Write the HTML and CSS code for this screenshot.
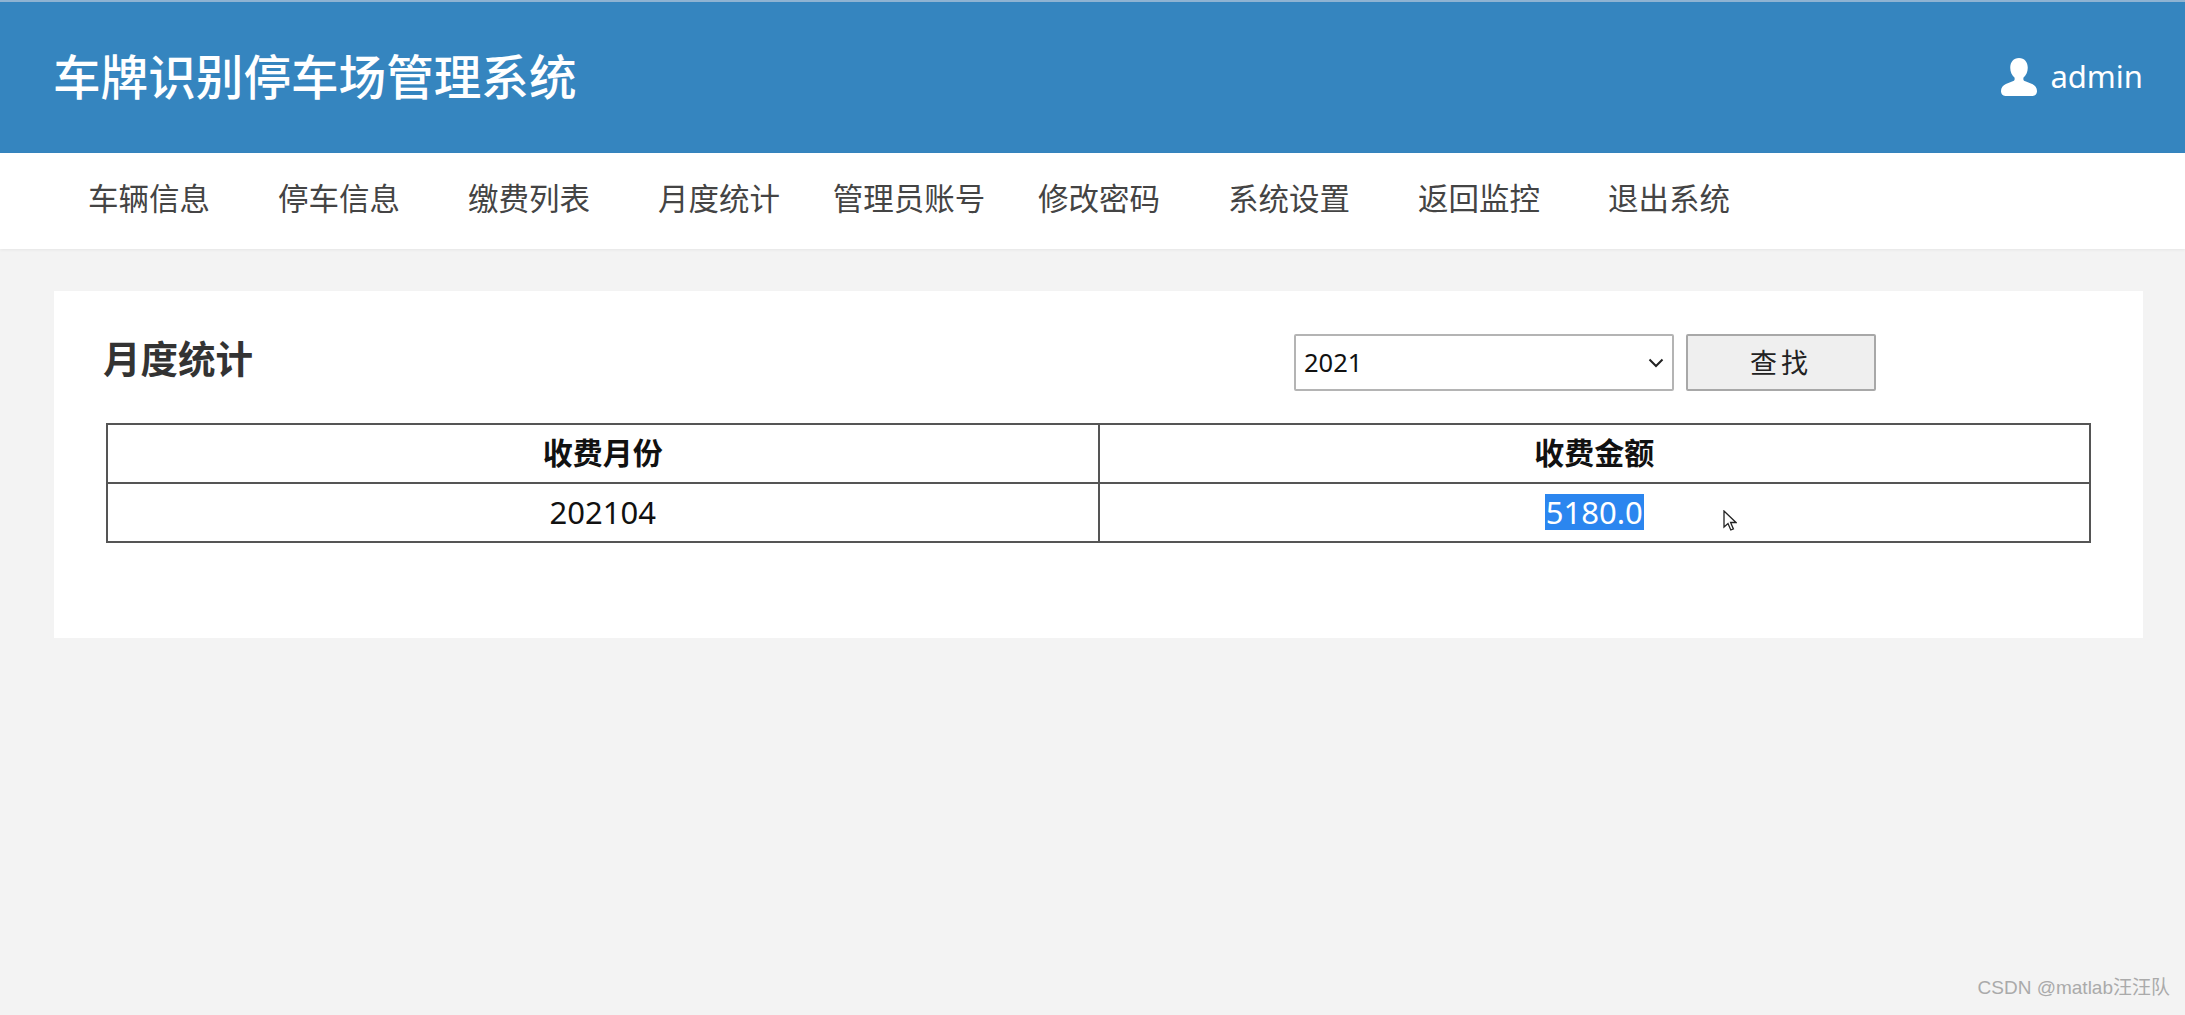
FILE: index.html
```html
<!DOCTYPE html>
<html lang="zh-CN">
<head>
<meta charset="utf-8">
<title>车牌识别停车场管理系统</title>
<link rel="stylesheet" href="styles.css">
</head>
<body>
<header class="topbar">
  <h1 class="brand">车牌识别停车场管理系统</h1>
  <div class="user">
    <svg class="user-icon" viewBox="0 0 37 39" aria-hidden="true"><path fill="#fff" d="M18.500 0c5.600 0 9 4.300 9 10 0 4.200-1.700 8-4.500 10.200v1.500c0 1 .7 1.600 2 2.100l7 3c3 1.300 5 3.900 5 7.200 0 2.600-1.600 5-4.500 5H4.500C1.600 39 0 36.600 0 34c0-3.300 2-5.900 5-7.200l7-3c1.300-.5 2-1.100 2-2.100v-1.500C11.200 18 9.500 14.200 9.500 10c0-5.700 3.400-10 9-10z"/></svg>
    <span class="user-name">admin</span>
  </div>
</header>
<nav class="nav">
  <a class="nav-item">车辆信息</a>
  <a class="nav-item">停车信息</a>
  <a class="nav-item">缴费列表</a>
  <a class="nav-item">月度统计</a>
  <a class="nav-item">管理员账号</a>
  <a class="nav-item">修改密码</a>
  <a class="nav-item">系统设置</a>
  <a class="nav-item">返回监控</a>
  <a class="nav-item">退出系统</a>
</nav>
<main class="main">
  <section class="card">
    <div class="card-head">
      <h2 class="card-title">月度统计</h2>
      <form class="search">
        <div class="select-wrap">
          <select class="select"><option>2021</option></select>
          <svg class="select-arrow" viewBox="0 0 16 10" aria-hidden="true"><path d="M1.500 1.500 8 8l6.500-6.500" fill="none" stroke="#222" stroke-width="2"/></svg>
        </div>
        <button class="button" type="button">查找</button>
      </form>
    </div>
    <table class="table">
      <thead>
        <tr><th>收费月份</th><th>收费金额</th></tr>
      </thead>
      <tbody>
        <tr><td>202104</td><td><span class="selected">5180.0</span></td></tr>
      </tbody>
    </table>
  </section>
</main>
<svg class="cursor" viewBox="0 0 14 22" aria-hidden="true"><path d="M1 1v16l4-3.500 2.800 6.500 2.600-1.100L7.600 12.500H13z" fill="#fff" stroke="#222" stroke-width="1.300"/></svg>
<div class="watermark">CSDN @matlab汪汪队</div>
</body>
</html>
```
FILE: styles.css
```css
* { box-sizing: border-box; }
html, body { height: 100%; }
body {
  margin: 0;
  height: 1015px;
  overflow: hidden;
  background: #f3f3f3;
  font-family: "Noto Sans", "Noto Sans CJK SC", sans-serif;
  color: #111;
}
.topbar {
  height: 153px;
  background: #3585bf;
  border-top: 2px solid #8fb3d2;
  display: flex;
  align-items: center;
  justify-content: space-between;
  padding: 0 42px 0 53px;
  color: #fff;
}
.brand {
  margin: 0 0 5px;
  font-size: 47.600px;
  font-weight: 500;
  line-height: 1;
  font-family: "Noto Sans CJK SC", sans-serif;
}
.user { display: flex; align-items: center; gap: 13px; margin-bottom: 2px; }
.user-icon { width: 36px; height: 38px; display: block; }
.user-name { font-size: 31px; line-height: 1; }
.nav {
  height: 96px;
  background: #fff;
  display: flex;
  align-items: center;
  padding: 0 0 9px 54px;
  box-shadow: 0 1px 3px rgba(0,0,0,.06);
}
.nav-item {
  width: 190px;
  text-align: center;
  font-size: 30.500px;
  color: #444;
  font-family: "Noto Sans CJK SC", sans-serif;
}
.main { padding: 42px 42px 0 54px; }
.card {
  height: 347px;
  background: #fff;
  padding: 43px 51px 0 49px;
}
.card-head {
  display: grid;
  grid-template-columns: 1191px auto;
  align-items: start;
  height: 89px;
}
.card-title {
  margin: -5px 0 0;
  font-size: 37.500px;
  line-height: 56px;
  font-weight: 700;
  color: #333;
  font-family: "Noto Sans CJK SC", sans-serif;
}
.search { display: flex; gap: 12px; }
.select-wrap { position: relative; width: 380px; height: 57px; }
.select {
  appearance: none;
  width: 100%;
  height: 100%;
  background: #fff;
  border: 2px solid #b4b4b4;
  border-radius: 2px;
  padding: 0 0 2px 8px;
  font: 25.500px "Noto Sans", sans-serif;
  color: #111;
}
.select-arrow {
  position: absolute;
  right: 10px;
  top: 24px;
  width: 16px;
  height: 10px;
}
.button {
  width: 190px;
  height: 57px;
  background: #efefef;
  border: 2px solid #a8a8a8;
  border-radius: 2px;
  font: 27px "Noto Sans CJK SC", sans-serif;
  letter-spacing: 4px;
  color: #222;
  padding: 0 0 2px;
}
.table {
  margin-left: 3px;
  width: 1985px;
  border-collapse: collapse;
  table-layout: fixed;
}
.table th, .table td {
  height: 59px;
  border: 2px solid #555;
  text-align: center;
  padding: 0;
  font-size: 30px;
  line-height: 40px;
}
.table th { font-family: "Noto Sans CJK SC", sans-serif; font-weight: 700; padding-bottom: 5px; }
.table td { font-size: 31px; padding-bottom: 2px; }
.selected {
  background: #2b86ef;
  color: #fff;
  display: inline-block;
  line-height: 36px;
  padding: 0 1px;
}
.cursor {
  position: absolute;
  left: 1723px;
  top: 510px;
  width: 14px;
  height: 22px;
}
.watermark {
  position: absolute;
  right: 15px;
  bottom: 16px;
  font-size: 19px;
  line-height: 22px;
  color: #aaa;
  font-family: "Liberation Sans", "Noto Sans CJK SC", sans-serif;
}
```
